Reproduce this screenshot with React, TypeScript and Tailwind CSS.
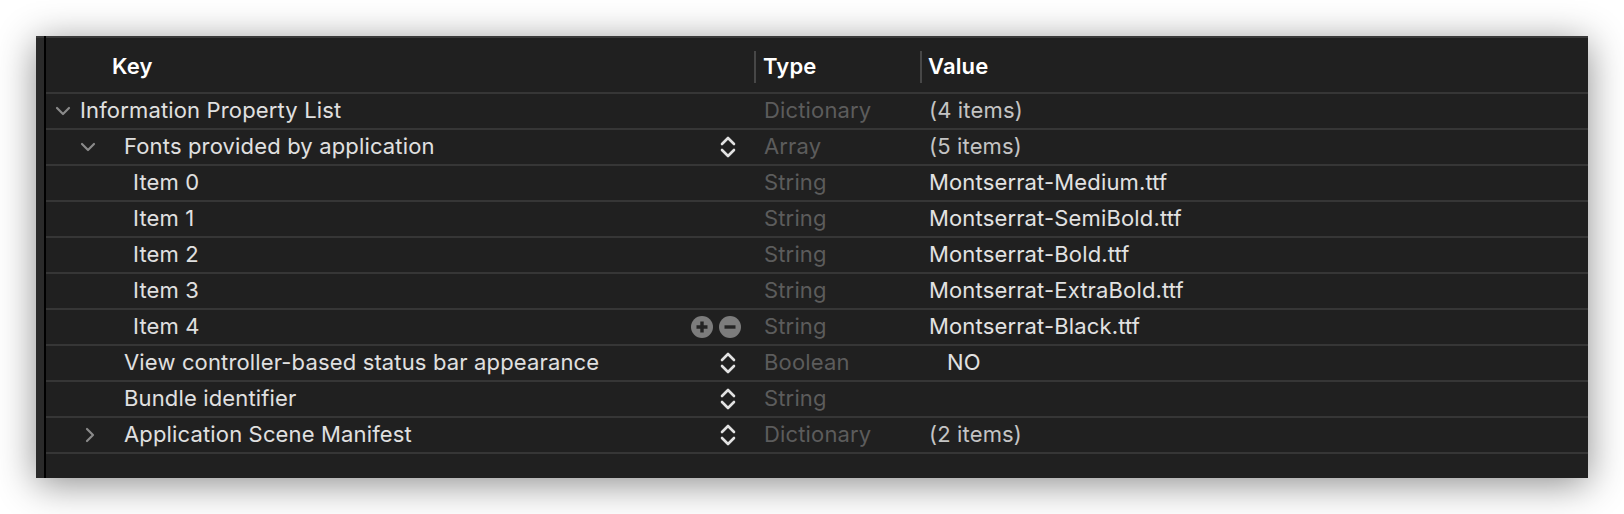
import React from "react";

type Row = {
  key: string;
  keyPad: number;
  chevron?: "down" | "right";
  chevronPad?: number;
  control?: "updown" | "plusminus";
  type: string;
  value: string;
  valuePad?: number;
  dimValue?: boolean;
};

const rows: Row[] = [
  { key: "Information Property List", keyPad: 34, chevron: "down", chevronPad: 9, type: "Dictionary", value: "(4 items)", dimValue: true },
  { key: "Fonts provided by application", keyPad: 78, chevron: "down", chevronPad: 34, control: "updown", type: "Array", value: "(5 items)", dimValue: true },
  { key: "Item 0", keyPad: 87, type: "String", value: "Montserrat-Medium.ttf" },
  { key: "Item 1", keyPad: 87, type: "String", value: "Montserrat-SemiBold.ttf" },
  { key: "Item 2", keyPad: 87, type: "String", value: "Montserrat-Bold.ttf" },
  { key: "Item 3", keyPad: 87, type: "String", value: "Montserrat-ExtraBold.ttf" },
  { key: "Item 4", keyPad: 87, control: "plusminus", type: "String", value: "Montserrat-Black.ttf" },
  { key: "View controller-based status bar appearance", keyPad: 78, control: "updown", type: "Boolean", value: "NO", valuePad: 27 },
  { key: "Bundle identifier", keyPad: 78, control: "updown", type: "String", value: "" },
  { key: "Application Scene Manifest", keyPad: 78, chevron: "right", chevronPad: 39, control: "updown", type: "Dictionary", value: "(2 items)", dimValue: true },
];

function ChevronDown() {
  return (
    <svg width="16" height="10" viewBox="0 0 16 10" className="block">
      <path d="M2 2 L8 8 L14 2" fill="none" stroke="#8a8a8a" strokeWidth="2.2" strokeLinecap="round" strokeLinejoin="round" />
    </svg>
  );
}

function ChevronRight() {
  return (
    <svg width="10" height="16" viewBox="0 0 10 16" className="block">
      <path d="M2 2 L8 8 L2 14" fill="none" stroke="#8a8a8a" strokeWidth="2.2" strokeLinecap="round" strokeLinejoin="round" />
    </svg>
  );
}

function UpDown() {
  return (
    <svg width="18" height="24" viewBox="0 0 18 24" className="block">
      <path d="M3 9 L9 3 L15 9" fill="none" stroke="#e2e2e2" strokeWidth="2.6" strokeLinecap="round" strokeLinejoin="round" />
      <path d="M3 15 L9 21 L15 15" fill="none" stroke="#e2e2e2" strokeWidth="2.6" strokeLinecap="round" strokeLinejoin="round" />
    </svg>
  );
}

function PlusMinus() {
  return (
    <div className="flex items-center gap-[6px]">
      <svg width="22" height="22" viewBox="0 0 22 22" className="block">
        <circle cx="11" cy="11" r="11" fill="#7c7c7c" />
        <path d="M11 5.5 V16.5 M5.5 11 H16.5" stroke="#242424" strokeWidth="3.4" />
      </svg>
      <svg width="22" height="22" viewBox="0 0 22 22" className="block">
        <circle cx="11" cy="11" r="11" fill="#7c7c7c" />
        <path d="M5.5 11 H16.5" stroke="#242424" strokeWidth="3.4" />
      </svg>
    </div>
  );
}

export default function App() {
  return (
    <div
      className="w-[1624px] h-[514px] bg-white pl-[36px] pt-[36px]"
      style={{ fontFamily: "Inter, 'Liberation Sans', sans-serif" }}
    >
      <div className="w-[1552px] h-[442px] bg-[#202020] flex shadow-[0_6px_36px_rgba(0,0,0,0.45)]">
        <div className="w-[8px] bg-[#2a2a2a] border-t-2 border-[#3a3a3a]" />
        <div className="w-[2px] bg-black" />
        <div className="flex-1 flex flex-col border-t-2 border-[#3a3a3a] tracking-[0.15px]">
          {/* header */}
          <div className="h-[54px] pt-[3px] flex items-center text-white font-semibold text-[22px]">
            <div className="w-[708px] pl-[66px]">Key</div>
            <div className="w-[166px] h-[32px] flex items-center border-l-2 border-[#474747] pl-[7px]">Type</div>
            <div className="flex-1 h-[32px] flex items-center border-l-2 border-[#474747] pl-[6px]">Value</div>
          </div>
          {rows.map((r, i) => (
            <div key={i} className="h-[36px] border-t-2 border-[#363636] flex items-center text-[22px]">
              <div className="w-[708px] h-full relative flex items-center">
                {r.chevron && (
                  <div className="absolute top-0 bottom-0 flex items-center" style={{ left: r.chevronPad }}>
                    {r.chevron === "down" ? <ChevronDown /> : <ChevronRight />}
                  </div>
                )}
                <div className="text-[#e0e0e0] flex-1 whitespace-nowrap pb-[2px]" style={{ paddingLeft: r.keyPad }}>
                  {r.key}
                </div>
                {r.control === "updown" && (
                  <div className="mr-[17px]">
                    <UpDown />
                  </div>
                )}
                {r.control === "plusminus" && (
                  <div className="mr-[13px]">
                    <PlusMinus />
                  </div>
                )}
              </div>
              <div className="w-[166px] pl-[10px] pb-[2px] text-[#5c5c5c]">{r.type}</div>
              <div
                className={r.dimValue ? "flex-1 pb-[2px] text-[#c4c4c4]" : "flex-1 pb-[2px] text-[#e2e2e2]"}
                style={{ paddingLeft: r.valuePad ?? 9 }}
              >
                {r.value}
              </div>
            </div>
          ))}
          <div className="flex-1 border-t-2 border-[#363636]" />
        </div>
      </div>
    </div>
  );
}
